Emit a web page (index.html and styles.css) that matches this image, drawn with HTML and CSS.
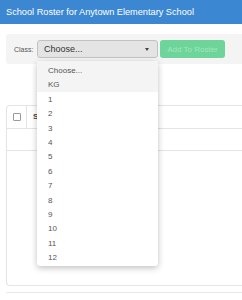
FILE: index.html
```html
<!DOCTYPE html>
<html lang="en">
<head>
    <meta charset="UTF-8">
    <meta name="viewport" content="width=device-width, initial-scale=1.0">
    <title>School Roster</title>
    <link rel="stylesheet" href="styles.css">
</head>
<body>
    <div class="header">School Roster for Anytown Elementary School</div>

    <div class="main">
        <div class="toolbar">
            <span class="label">Class:</span>
            <div class="select">
                <span>Choose...</span>
                <span class="caret"></span>
            </div>
            <button class="add-btn" disabled>Add To Roster</button>
        </div>

        <!-- open dropdown of the class select -->
        <ul class="dropdown">
            <li class="active">Choose...</li>
            <li class="active">KG</li>
            <li>1</li>
            <li>2</li>
            <li>3</li>
            <li>4</li>
            <li>5</li>
            <li>6</li>
            <li>7</li>
            <li>8</li>
            <li>9</li>
            <li>10</li>
            <li>11</li>
            <li>12</li>
        </ul>

        <div class="table-card">
            <div class="table-head">
                <div class="check-cell"><span class="checkbox"></span></div>
                <div class="name-cell">Student</div>
            </div>
            <div class="table-row"></div>
        </div>
        <div class="footer-line"></div>
    </div>
</body>
</html>
```

FILE: styles.css
```css
body {
    margin: 0;
    font-family: "Liberation Sans", Arial, sans-serif;
    background: #fff;
    overflow: hidden;
}
.header {
    height: 24px;
    line-height: 25px;
    padding-left: 6px;
    background-color: #3b87d1;
    color: #fff;
    font-size: 9.2px;
}
.main {
    position: relative;
    width: 242px;
    box-sizing: border-box;
    padding-left: 6px;
}
.toolbar {
    margin-top: 10px;
    height: 30px;
    display: flex;
    align-items: center;
    padding-left: 8px;
    background-color: #f4f4f4;
    border-radius: 3px 0 0 3px;
}
.label {
    font-size: 7px;
    color: #555;
    width: 23px;
}
.select {
    display: flex;
    align-items: center;
    justify-content: space-between;
    padding: 0 8px 0 6px;
    box-sizing: border-box;
    width: 121px;
    height: 18px;
    background-color: #e4e4e4;
    border: 1px solid #c2c2c2;
    border-radius: 3px;
    font-size: 9px;
    color: #333;
}
.caret {
    width: 0;
    height: 0;
    border-left: 2.5px solid transparent;
    border-right: 2.5px solid transparent;
    border-top: 3px solid #444;
}
.add-btn {
    margin-left: 2px;
    width: 65px;
    height: 18px;
    padding: 0;
    border: none;
    border-radius: 3px;
    background-color: #6dd49a;
    color: #a3e6bd;
    font-family: "Liberation Sans", Arial, sans-serif;
    font-size: 8px;
}
.dropdown {
    position: absolute;
    left: 37px;
    top: 27px;
    width: 121px;
    margin: 0;
    padding: 0 0 2px;
    list-style: none;
    background: #fff;
    border-radius: 3px;
    box-shadow: 0 2px 6px rgba(0, 0, 0, 0.25);
    z-index: 2;
}
.dropdown li {
    height: 14.4px;
    line-height: 15px;
    padding-left: 11px;
    font-size: 8px;
    color: #555;
}
.dropdown li:first-child {
    padding-top: 2px;
}
.dropdown li.active {
    background-color: #f4f4f4;
}
.table-card {
    margin-top: 41px;
    height: 179px;
    border: 1px solid #e4e4e4;
    border-right: none;
    border-radius: 4px 0 0 4px;
}
.table-head {
    display: flex;
    height: 22px;
    border-bottom: 1px solid #e4e4e4;
}
.check-cell {
    width: 19px;
    display: flex;
    align-items: center;
    justify-content: center;
    border-right: 1px solid #e4e4e4;
}
.checkbox {
    width: 6px;
    height: 6px;
    border: 1px solid #999;
    border-radius: 1px;
}
.name-cell {
    padding-left: 6px;
    line-height: 22px;
    font-size: 8px;
    font-weight: bold;
    color: #444;
}
.table-row {
    height: 21px;
    border-bottom: 1px solid #e4e4e4;
}
.footer-line {
    margin-top: 6px;
    border-top: 1px solid #e8e8e8;
}
```
